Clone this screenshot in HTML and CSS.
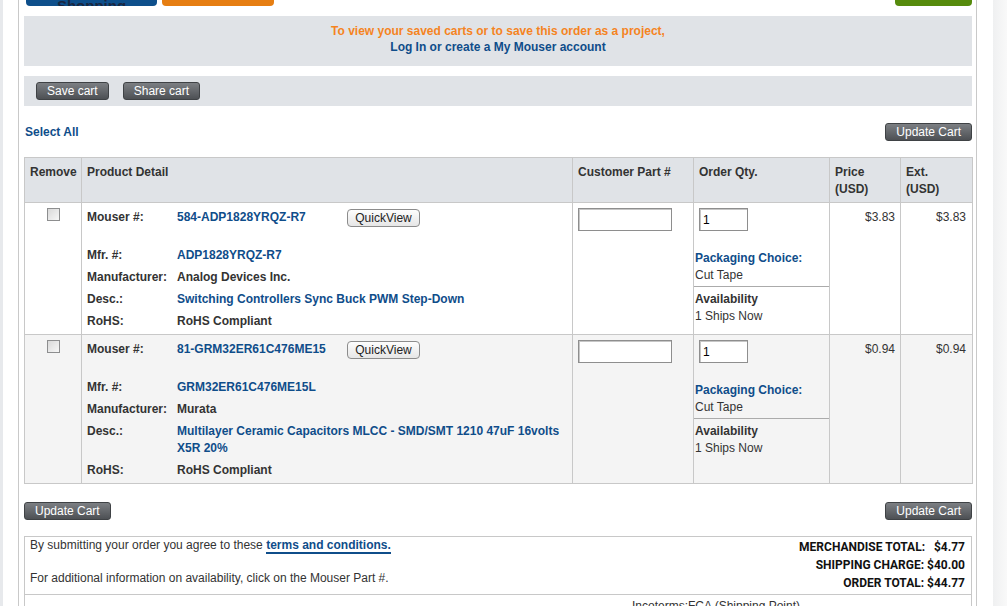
FILE: index.html
```html
<!DOCTYPE html>
<html lang="en">
<head>
    <meta charset="UTF-8">
    <title>Shopping Cart</title>
    <link rel="stylesheet" href="styles.css">
</head>
<body>
    <div class="main">
        <!-- top actions, scrolled mostly out of view -->
        <div class="top-actions">
            <div class="top-left">
                <a class="big-btn blue-btn">Continue Shopping</a>
                <a class="big-btn orange-btn">Schedule Order</a>
            </div>
            <a class="big-btn green-btn">Checkout</a>
        </div>

        <div class="login-box">
            <div class="orange-text">To view your saved carts or to save this order as a project,</div>
            <a class="blue-text">Log In or create a My Mouser account</a>
        </div>

        <div class="cart-bar">
            <button class="btn">Save cart</button>
            <button class="btn">Share cart</button>
        </div>

        <div class="select-row">
            <a class="blue-text">Select All</a>
            <button class="btn">Update Cart</button>
        </div>

        <table class="cart">
            <colgroup>
                <col style="width:57px">
                <col style="width:491px">
                <col style="width:121px">
                <col style="width:136px">
                <col style="width:71px">
                <col style="width:72px">
            </colgroup>
            <tr>
                <th>Remove</th>
                <th>Product Detail</th>
                <th>Customer Part #</th>
                <th>Order Qty.</th>
                <th>Price<br>(USD)</th>
                <th>Ext.<br>(USD)</th>
            </tr>
            <tr>
                <td class="remove"><span class="check"></span></td>
                <td class="detail">
                    <div class="line first">
                        <span class="lbl">Mouser #:</span>
                        <a class="part">584-ADP1828YRQZ-R7</a>
                        <button class="qv">QuickView</button>
                    </div>
                    <div class="line"><span class="lbl">Mfr. #:</span><a class="val">ADP1828YRQZ-R7</a></div>
                    <div class="line"><span class="lbl">Manufacturer:</span><span class="val dark">Analog Devices Inc.</span></div>
                    <div class="line"><span class="lbl">Desc.:</span><a class="val">Switching Controllers Sync Buck PWM Step-Down</a></div>
                    <div class="line"><span class="lbl">RoHS:</span><span class="val dark">RoHS Compliant</span></div>
                </td>
                <td class="field"><input class="cust-in" type="text"></td>
                <td class="qty">
                    <input class="qty-in" type="text" value="1">
                    <div class="pack"><b class="blue-text">Packaging Choice:</b><br>Cut Tape</div>
                    <div class="avail"><b>Availability</b><br>1 Ships Now</div>
                </td>
                <td class="money">$3.83</td>
                <td class="money ext">$3.83</td>
            </tr>
            <tr class="alt">
                <td class="remove"><span class="check"></span></td>
                <td class="detail">
                    <div class="line first">
                        <span class="lbl">Mouser #:</span>
                        <a class="part">81-GRM32ER61C476ME15</a>
                        <button class="qv">QuickView</button>
                    </div>
                    <div class="line"><span class="lbl">Mfr. #:</span><a class="val">GRM32ER61C476ME15L</a></div>
                    <div class="line"><span class="lbl">Manufacturer:</span><span class="val dark">Murata</span></div>
                    <div class="line"><span class="lbl">Desc.:</span><a class="val">Multilayer Ceramic Capacitors MLCC - SMD/SMT 1210 47uF 16volts X5R 20%</a></div>
                    <div class="line"><span class="lbl">RoHS:</span><span class="val dark">RoHS Compliant</span></div>
                </td>
                <td class="field"><input class="cust-in" type="text"></td>
                <td class="qty">
                    <input class="qty-in" type="text" value="1">
                    <div class="pack"><b class="blue-text">Packaging Choice:</b><br>Cut Tape</div>
                    <div class="avail"><b>Availability</b><br>1 Ships Now</div>
                </td>
                <td class="money">$0.94</td>
                <td class="money ext">$0.94</td>
            </tr>
        </table>

        <div class="update-row">
            <button class="btn">Update Cart</button>
            <button class="btn">Update Cart</button>
        </div>

        <div class="summary">
            <div class="summary-top">
                <div class="notes">
                    <p>By submitting your order you agree to these <a class="terms">terms and conditions.</a></p>
                    <p class="second">For additional information on availability, click on the Mouser Part #.</p>
                </div>
                <div class="totals">
                    <div>MERCHANDISE TOTAL:&nbsp;&nbsp; $4.77</div>
                    <div>SHIPPING CHARGE: $40.00</div>
                    <div>ORDER TOTAL: $44.77</div>
                </div>
            </div>
            <div class="summary-bottom">
                <div></div>
                <div class="incoterms">Incoterms:FCA (Shipping Point)</div>
            </div>
        </div>
    </div>
</body>
</html>
```

FILE: styles.css
```css
html, body {
    margin: 0;
    padding: 0;
    min-height: 100%;
}
body {
    font-family: "Liberation Sans", Arial, sans-serif;
    font-size: 12px;
    color: #333;
    background: linear-gradient(to right, #e7e9ec 0, #e7e9ec 3px, #ffffff 3px, #ffffff 993px, #eff0f1 993px, #f9f9f9 1007px);
    overflow: hidden;
}
a {
    text-decoration: none;
    cursor: pointer;
}
.main {
    margin-left: 18px;
    width: 948px;
    padding: 0 4px 40px 5px;
    border-left: 1px solid #c9c9c9;
    border-right: 1px solid #c9c9c9;
    min-height: 606px;
}
.top-actions {
    display: flex;
    justify-content: space-between;
    margin-top: -18px;
}
.top-left {
    display: flex;
    gap: 5px;
    padding-left: 2px;
}
.big-btn {
    display: block;
    height: 24px;
    line-height: 16px;
    border-radius: 4px;
    font-size: 15px;
    font-weight: bold;
    text-align: center;
    overflow: hidden;
}
.blue-btn {
    width: 131px;
    background: #0e4f8b;
    color: #1a2640;
}
.orange-btn {
    width: 112px;
    background: #e67e12;
    color: #8a4a0a;
}
.green-btn {
    width: 77px;
    background: #568b0d;
    color: #568b0d;
}
.login-box {
    margin-top: 10px;
    height: 50px;
    box-sizing: border-box;
    padding-top: 7px;
    background: #e0e3e7;
    text-align: center;
    font-weight: bold;
    line-height: 16px;
}
.orange-text {
    color: #f5841f;
}
.blue-text {
    color: #0f4d8a;
    font-weight: bold;
}
.cart-bar {
    margin-top: 10px;
    height: 30px;
    background: #e0e3e7;
    display: flex;
    align-items: center;
    gap: 14px;
    padding-left: 12px;
}
.btn {
    height: 18px;
    padding: 0 10px;
    font-family: "Liberation Sans", Arial, sans-serif;
    font-size: 12px;
    line-height: 16px;
    color: #fff;
    background: linear-gradient(#7c7f83, #4d5054);
    border: 1px solid #3f4245;
    border-radius: 3px;
    cursor: pointer;
}
.select-row {
    display: flex;
    justify-content: space-between;
    align-items: center;
    height: 18px;
    margin: 17px 0 16px;
}
.select-row .blue-text {
    padding-left: 1px;
}
.cart {
    width: 948px;
    table-layout: fixed;
    border-collapse: collapse;
    border: 1px solid #c8c8c8;
}
.cart th, .cart td {
    border: 1px solid #c8c8c8;
    vertical-align: top;
    text-align: left;
}
.cart th {
    background: #e0e3e7;
    padding: 6px 5px 4px;
    line-height: 17px;
    font-weight: bold;
    color: #333;
}
.cart .alt td {
    background: #f4f4f4;
}
.remove {
    text-align: center !important;
    padding-top: 5px;
}
.check {
    display: inline-block;
    width: 11px;
    height: 11px;
    border: 1px solid #8d8e8f;
    background: linear-gradient(135deg, #d9d9d9, #f7f7f7);
}
.detail {
    padding: 3px 5px 2px;
}
.line {
    display: flex;
    padding: 2.5px 0;
    line-height: 17px;
    font-weight: bold;
}
.line.first {
    height: 22px;
    box-sizing: border-box;
    padding: 0;
    align-items: center;
    margin-bottom: 16px;
}
.lbl {
    width: 90px;
    flex: none;
    color: #333;
}
.part {
    width: 170px;
    flex: none;
    color: #0f4d8a;
}
.val {
    flex: 1;
    color: #0f4d8a;
}
.val.dark {
    color: #333;
}
.qv {
    height: 18px;
    width: 73px;
    padding: 0;
    font-family: "Liberation Sans", Arial, sans-serif;
    font-size: 12px;
    color: #222;
    background: linear-gradient(#fdfdfd, #e6e6e6);
    border: 1px solid #8c8c8c;
    border-radius: 4px;
    margin-top: 1px;
}
.field, .qty {
    padding: 0;
}
.cust-in, .qty-in {
    display: block;
    height: 23px;
    box-sizing: border-box;
    margin: 5px 0 0 5px;
    border: 1px solid #8e8e8e;
    box-shadow: inset 1px 1px 0 #c6c6c6;
    font-family: "Liberation Sans", Arial, sans-serif;
    font-size: 12px;
    padding: 2px 3px;
    background: #fff;
}
.cust-in {
    width: 94px;
}
.qty-in {
    width: 49px;
}
.pack {
    margin-top: 18.5px;
    padding: 0 1px 2.5px;
    line-height: 17px;
    border-bottom: 1px solid #ababab;
}
.avail {
    padding: 3.5px 1px 1.5px;
    line-height: 17px;
}
.money {
    text-align: right !important;
    padding: 6px 5px 0 0;
    line-height: 17px;
}
.money.ext {
    padding-right: 6px;
}
.update-row {
    display: flex;
    justify-content: space-between;
    margin: 18px 0 16px;
}
.summary {
    border: 1px solid #c8c8c8;
}
.summary-top {
    display: flex;
    justify-content: space-between;
    border-bottom: 1px solid #c8c8c8;
}
.notes {
    padding-left: 5px;
}
.notes p {
    margin: 0;
    line-height: 17px;
}
.notes .second {
    margin-top: 16px;
}
.terms {
    color: #0f4d8a;
    font-weight: bold;
    border-bottom: 2px solid #0f4d8a;
}
.totals {
    padding: 1px 6px 2px 0;
    text-align: right;
    font-family: Roboto, "Liberation Sans", sans-serif;
    font-weight: bold;
    font-size: 12px;
    line-height: 18px;
    color: #111;
}
.summary-bottom {
    display: grid;
    grid-template-columns: 1fr 510px;
}
.incoterms {
    text-align: center;
    padding-top: 3px;
    line-height: 17px;
}
```
